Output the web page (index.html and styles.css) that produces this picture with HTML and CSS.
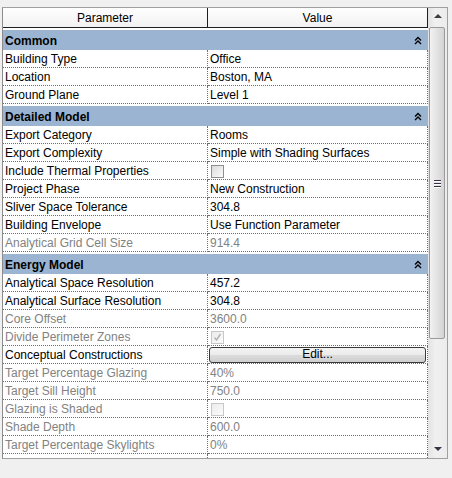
FILE: index.html
```html
<!DOCTYPE html>
<html lang="en">
<head>
    <meta charset="UTF-8">
    <title>Energy Settings</title>
    <link rel="stylesheet" href="styles.css">
</head>
<body>

<div class="grid-frame">
    <div class="grid">
        <div class="grid-head">
            <div class="head-name">Parameter</div>
            <div class="head-value">Value</div>
        </div>

        <!-- Common -->
        <div class="grid-group">
            <span>Common</span>
            <svg class="collapse" width="8" height="9" viewBox="0 0 8 9"><path d="M1 4.5 L4 1.5 L7 4.5 M1 8 L4 5 L7 8" fill="none" stroke="#000" stroke-width="1.4"/></svg>
        </div>
        <div class="grid-row"><div class="cell-name">Building Type</div><div class="cell-value">Office</div></div>
        <div class="grid-row"><div class="cell-name">Location</div><div class="cell-value">Boston, MA</div></div>
        <div class="grid-row"><div class="cell-name">Ground Plane</div><div class="cell-value">Level 1</div></div>

        <!-- Detailed Model -->
        <div class="grid-group">
            <span>Detailed Model</span>
            <svg class="collapse" width="8" height="9" viewBox="0 0 8 9"><path d="M1 4.5 L4 1.5 L7 4.5 M1 8 L4 5 L7 8" fill="none" stroke="#000" stroke-width="1.4"/></svg>
        </div>
        <div class="grid-row"><div class="cell-name">Export Category</div><div class="cell-value">Rooms</div></div>
        <div class="grid-row"><div class="cell-name">Export Complexity</div><div class="cell-value">Simple with Shading Surfaces</div></div>
        <div class="grid-row"><div class="cell-name">Include Thermal Properties</div><div class="cell-value"><span class="check"></span></div></div>
        <div class="grid-row"><div class="cell-name">Project Phase</div><div class="cell-value">New Construction</div></div>
        <div class="grid-row"><div class="cell-name">Sliver Space Tolerance</div><div class="cell-value">304.8</div></div>
        <div class="grid-row"><div class="cell-name">Building Envelope</div><div class="cell-value">Use Function Parameter</div></div>
        <div class="grid-row is-disabled"><div class="cell-name">Analytical Grid Cell Size</div><div class="cell-value">914.4</div></div>

        <!-- Energy Model -->
        <div class="grid-group">
            <span>Energy Model</span>
            <svg class="collapse" width="8" height="9" viewBox="0 0 8 9"><path d="M1 4.5 L4 1.5 L7 4.5 M1 8 L4 5 L7 8" fill="none" stroke="#000" stroke-width="1.4"/></svg>
        </div>
        <div class="grid-row"><div class="cell-name">Analytical Space Resolution</div><div class="cell-value">457.2</div></div>
        <div class="grid-row"><div class="cell-name">Analytical Surface Resolution</div><div class="cell-value">304.8</div></div>
        <div class="grid-row is-disabled"><div class="cell-name">Core Offset</div><div class="cell-value">3600.0</div></div>
        <div class="grid-row is-disabled">
            <div class="cell-name">Divide Perimeter Zones</div>
            <div class="cell-value"><span class="check"><svg width="11" height="11" viewBox="0 0 11 11"><path d="M2.5 5.5 L4.5 8 L8.5 2" fill="none" stroke="#b4b4b4" stroke-width="1.5"/></svg></span></div>
        </div>
        <div class="grid-row"><div class="cell-name">Conceptual Constructions</div><div class="cell-value"><button class="edit-button">Edit...</button></div></div>
        <div class="grid-row is-disabled"><div class="cell-name">Target Percentage Glazing</div><div class="cell-value">40%</div></div>
        <div class="grid-row is-disabled"><div class="cell-name">Target Sill Height</div><div class="cell-value">750.0</div></div>
        <div class="grid-row is-disabled"><div class="cell-name">Glazing is Shaded</div><div class="cell-value"><span class="check"></span></div></div>
        <div class="grid-row is-disabled"><div class="cell-name">Shade Depth</div><div class="cell-value">600.0</div></div>
        <div class="grid-row is-disabled"><div class="cell-name">Target Percentage Skylights</div><div class="cell-value">0%</div></div>
        <div class="grid-filler"><div class="cell-name"></div><div class="cell-value"></div></div>
    </div>

    <!-- scrollbar -->
    <div class="scrollbar">
        <div class="sb-button"><span class="arrow-up"></span></div>
        <div class="sb-thumb">
            <span class="grip"></span>
            <span class="grip"></span>
            <span class="grip"></span>
        </div>
        <div class="sb-track"></div>
        <div class="sb-button sb-down"><span class="arrow-down"></span></div>
    </div>
</div>

</body>
</html>
```

FILE: styles.css
```css
body {
    margin: 0;
    background-color: #f0f0f0;
    font-family: 'Liberation Sans', Arial, sans-serif;
    font-size: 12px;
    color: #000;
}

.grid-frame {
    display: flex;
    box-sizing: border-box;
    width: 446px;
    height: 452px;
    margin: 7px 0 0 2px;
    border: 1px solid #a0a0a0;
    border-left-color: #8c8c8c;
    background-color: #fff;
}

.grid {
    display: flex;
    flex-direction: column;
    width: 425px;
}

/* header */
.grid-head {
    display: flex;
    box-sizing: border-box;
    height: 20px;
    padding-top: 1px;
    border-bottom: 1px solid #1e1e1e;
    border-right: 1px solid #1e1e1e;
    background: linear-gradient(#fefefe, #f2f2f2);
    line-height: 18px;
    text-align: center;
}

.head-name {
    width: 204px;
    margin-top: -1px;
    border-right: 1px solid #1e1e1e;
    line-height: 20px;
}

.head-value {
    flex: 1;
}

/* group rows */
.grid-group {
    display: flex;
    align-items: center;
    justify-content: space-between;
    box-sizing: border-box;
    height: 20px;
    margin-top: 2px;
    padding: 1px 6px 0 2px;
    background-color: #9bb4d1;
    font-weight: bold;
}

.collapse {
    display: block;
    margin-top: -1px;
}

/* property rows */
.grid-row, .grid-filler {
    display: flex;
    height: 18px;
}

.grid-filler {
    flex: 1;
}

.cell-name, .cell-value {
    box-sizing: border-box;
    padding: 1px 0 0 2px;
    border-bottom: 1px dotted #6e6e6e;
    border-right: 1px dotted #6e6e6e;
    line-height: 16px;
    white-space: nowrap;
    overflow: hidden;
}

.cell-name {
    width: 205px;
}

.cell-value {
    flex: 1;
    display: flex;
    align-items: center;
}

.grid-filler .cell-name, .grid-filler .cell-value {
    border-bottom: none;
}

.is-disabled {
    color: #828282;
}

.check {
    display: flex;
    align-items: center;
    justify-content: center;
    box-sizing: border-box;
    width: 13px;
    height: 13px;
    margin: 0 0 0 1px;
    border: 1px solid #8e8f8f;
    background: linear-gradient(135deg, #dcdcdc, #fafafa);
}

.is-disabled .check {
    border-color: #c8c8c8;
    background: linear-gradient(135deg, #ececec, #fbfbfb);
}

.edit-button {
    width: 217px;
    height: 16px;
    margin: -1px 0 0 -1px;
    padding: 0;
    border: 1px solid #3a3a3a;
    border-radius: 3px;
    background: linear-gradient(#f4f4f4 0%, #ebebeb 50%, #dcdcdc 51%, #cfcfcf 100%);
    font-family: 'Liberation Sans', Arial, sans-serif;
    font-size: 12px;
    line-height: 13px;
    color: #000;
}

/* scrollbar */
.scrollbar {
    display: flex;
    flex-direction: column;
    flex: 1;
    background: linear-gradient(90deg, #e3e3e3, #f0f0f0 40%, #ececec);
}

.sb-button {
    display: flex;
    align-items: center;
    justify-content: center;
    height: 18px;
}

.sb-down {
    height: 17px;
    margin-bottom: 1px;
}

.arrow-up {
    width: 0;
    height: 0;
    margin-top: -2px;
    border-left: 4px solid transparent;
    border-right: 4px solid transparent;
    border-bottom: 4px solid #3c3c3c;
}

.arrow-down {
    width: 0;
    height: 0;
    border-left: 4px solid transparent;
    border-right: 4px solid transparent;
    border-top: 4px solid #3c3044;
}

.sb-thumb {
    display: flex;
    flex-direction: column;
    align-items: center;
    justify-content: center;
    gap: 2px;
    box-sizing: border-box;
    height: 312px;
    margin: 1px 2px 0 1px;
    border: 1px solid #9a9a9a;
    border-radius: 2px;
    background: linear-gradient(90deg, #f2f2f2, #e4e4e4 45%, #d4d4d4);
}

.grip {
    display: block;
    width: 7px;
    height: 1px;
    background-color: #3b3147;
    box-shadow: 0 1px 0 #fff;
}

.sb-track {
    flex: 1;
}
```
